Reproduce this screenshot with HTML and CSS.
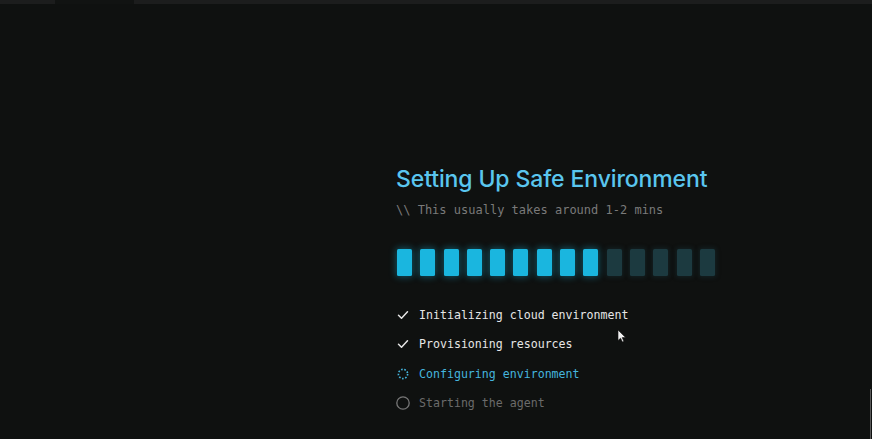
FILE: index.html
```html
<!DOCTYPE html>
<html lang="en">
<head>
<meta charset="utf-8">
<title>Setting Up Safe Environment</title>
<link rel="stylesheet" href="styles.css">
</head>
<body>
<div class="topbar">
  <div class="tab tab-left"></div>
  <div class="tab tab-gap"></div>
  <div class="tab tab-right"></div>
</div>
<main class="stage">
  <section class="setup">
    <h1 class="title">Setting Up Safe Environment</h1>
    <p class="subtitle">\\ This usually takes around 1-2 mins</p>
    <div class="progress">
      <span class="seg on"></span><span class="seg on"></span><span class="seg on"></span>
      <span class="seg on"></span><span class="seg on"></span><span class="seg on"></span>
      <span class="seg on"></span><span class="seg on"></span><span class="seg on"></span>
      <span class="seg off"></span><span class="seg off"></span><span class="seg off"></span>
      <span class="seg off"></span><span class="seg off"></span>
    </div>
    <ul class="steps">
      <li class="step done">
        <svg class="icon" viewBox="0 0 14 14"><path d="M2.5 7.3 L5.5 10.2 L11.5 3.8" fill="none" stroke="currentColor" stroke-width="1.5" stroke-linecap="round" stroke-linejoin="round"/></svg>
        <span>Initializing cloud environment</span>
      </li>
      <li class="step done">
        <svg class="icon" viewBox="0 0 14 14"><path d="M2.5 7.3 L5.5 10.2 L11.5 3.8" fill="none" stroke="currentColor" stroke-width="1.5" stroke-linecap="round" stroke-linejoin="round"/></svg>
        <span>Provisioning resources</span>
      </li>
      <li class="step active">
        <svg class="icon" viewBox="0 0 14 14"><circle cx="7" cy="7" r="4.6" fill="none" stroke="currentColor" stroke-width="1.6" stroke-dasharray="1.6 1.6"/></svg>
        <span>Configuring environment</span>
      </li>
      <li class="step pending">
        <svg class="icon" viewBox="0 0 14 14"><circle cx="7" cy="7" r="6.2" fill="none" stroke="currentColor" stroke-width="1.3"/></svg>
        <span>Starting the agent</span>
      </li>
    </ul>
  </section>
  <svg class="cursor" viewBox="0 0 10 14"><path d="M1 1 L1 11.5 L3.6 9.2 L5.4 13 L6.9 12.3 L5.2 8.6 L8.6 8.6 Z" fill="#f2f2f2" stroke="#111" stroke-width="0.6"/></svg>
</main>
<div class="edge"></div>
</body>
</html>
```
FILE: styles.css
```css
* { box-sizing: border-box; }
html, body {
  margin: 0;
  padding: 0;
  width: 872px;
  height: 439px;
  overflow: hidden;
  background: #0f1110;
}
body {
  position: relative;
  font-family: Inter, "Noto Sans", sans-serif;
}
.topbar {
  display: flex;
  height: 4px;
}
.tab { height: 4px; }
.tab-left { width: 55px; background: #1c1d1d; }
.tab-gap { width: 79px; background: #111312; }
.tab-right { flex: 1; background: #1c1d1d; }

.stage {
  position: relative;
  height: 435px;
  display: flex;
  padding-left: 396px;
  padding-top: 161px;
}
.setup {
  display: flex;
  flex-direction: column;
}
.title {
  margin: 0;
  font-family: Inter, "Noto Sans", sans-serif;
  font-weight: 500;
  font-size: 23px;
  line-height: 28px;
  color: #5ac6ef;
  letter-spacing: -0.12px;
}
.subtitle {
  margin: 9px 0 0 0;
  font-family: "DejaVu Sans Mono", "Liberation Mono", monospace;
  font-size: 12px;
  line-height: 16px;
  color: #7a7a7a;
}
.progress {
  display: flex;
  gap: 8.3px;
  margin-top: 31px;
  padding-left: 1px;
}
.seg {
  width: 15px;
  height: 27px;
  border-radius: 1.5px;
}
.seg.on {
  background: #1ab6df;
  box-shadow: 0 0 7px 1px rgba(26, 182, 223, 0.4);
}
.seg.off {
  background: #1c3a40;
  box-shadow: 0 0 5px 1px rgba(28, 70, 80, 0.35);
}
.steps {
  list-style: none;
  margin: 31px 0 0 0;
  padding: 0;
  display: flex;
  flex-direction: column;
  gap: 13.3px;
}
.step {
  display: flex;
  align-items: center;
  gap: 9px;
  height: 16px;
  font-family: "DejaVu Sans Mono", "Liberation Mono", monospace;
  font-size: 11.6px;
}
.icon {
  width: 14px;
  height: 14px;
  flex: none;
}
.step.done { color: #e6e6e6; }
.step.active { color: #45b5de; }
.step.pending { color: #6b6b6b; }
.step.pending .icon { color: #777; }

.cursor {
  position: absolute;
  left: 617px;
  top: 325px;
  width: 10px;
  height: 14px;
}
.edge {
  position: absolute;
  right: 1px;
  top: 389px;
  width: 1px;
  height: 50px;
  background: #5a5a5a;
}
```
